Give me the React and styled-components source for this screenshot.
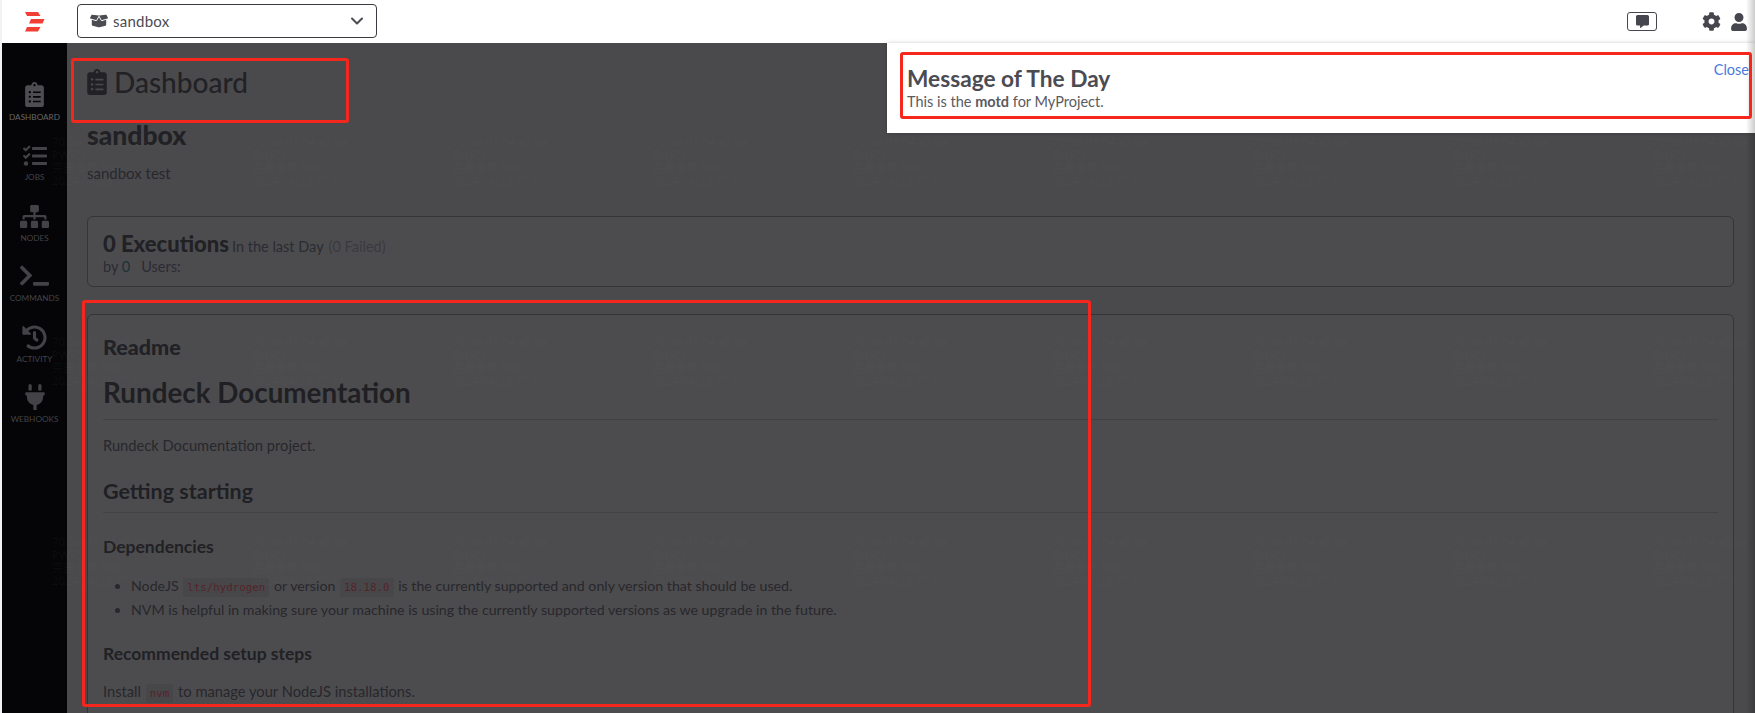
import React from "react";
import styled, { createGlobalStyle } from "styled-components";
import { FaClipboardList, FaTasks, FaSitemap, FaTerminal, FaHistory, FaPlug, FaBoxOpen, FaCog, FaUser, FaCommentAlt } from "react-icons/fa";
import { ChevronDown } from "lucide-react";

const Global = createGlobalStyle`
  html, body { margin: 0; padding: 0; height: 100%; overflow: hidden; background: #fff; }
  * { box-sizing: border-box; }
  body { font-family: "Lato", "Noto Sans", sans-serif; }
`;

const Page = styled.div`
  position: relative;
  width: 1755px;
  height: 713px;
  overflow: hidden;
  padding-left: 2px;
  background: #f2f2f4;
  display: flex;
  flex-direction: column;
`;

const TopBar = styled.header`
  flex: 0 0 43px;
  background: #fff;
  display: flex;
  align-items: center;
  padding-right: 7px;
`;

const LogoSlot = styled.div`
  width: 75px;
  display: flex;
  padding-left: 23px;
`;

const ProjectSelect = styled.div`
  width: 300px;
  height: 34px;
  margin-top: -1px;
  border: 1px solid #3a3a40;
  border-radius: 4px;
  display: flex;
  align-items: center;
  gap: 5px;
  padding: 0 9px 0 12px;
  color: #4b4b52;
  font-size: 15px;
  letter-spacing: .25px;
  svg:last-child { margin-left: auto; }
`;

const TopRight = styled.div`
  margin-left: auto;
  display: flex;
  align-items: center;
  color: #46464e;
`;

const ChatButton = styled.div`
  width: 30px;
  height: 19px;
  border: 1px solid #46464e;
  border-radius: 3px;
  display: flex;
  align-items: center;
  justify-content: center;
  margin-right: 45px;
`;

const ToolIcon = styled.span`
  display: flex;
  margin-left: ${(p) => p.$gap || 0}px;
`;

const Body = styled.div`
  flex: 1;
  display: flex;
  min-height: 0;
`;

const Side = styled.nav`
  flex: 0 0 65px;
  background: #050507;
  padding-top: 38px;
  display: flex;
  flex-direction: column;
`;

const NavItem = styled.div`
  height: 60.4px;
  display: flex;
  flex-direction: column;
  align-items: center;
  font-size: 8.2px;
  text-transform: uppercase;
`;

const NavIcon = styled.div`
  height: 30px;
  display: flex;
  align-items: center;
  justify-content: center;
  color: ${(p) => (p.$on ? "#4d4d52" : "#434347")};
  svg { transform: translateY(${(p) => p.$dy || 0}px); }
`;

const NavLabel = styled.span`
  line-height: 12px;
  color: ${(p) => (p.$on ? "#66666b" : "#434347")};
`;

const Main = styled.main`
  flex: 1;
  background: #4a4a4c;
  padding: 24px 21px 0 20px;
  min-width: 0;
`;

const PageTitle = styled.h1`
  margin: 0;
  height: 30px;
  display: flex;
  align-items: center;
  gap: 4px;
  font-size: 28px;
  font-weight: 500;
  line-height: 30px;
  color: #212126;
  svg { margin-left: -3px; }
`;

const ProjectName = styled.h2`
  margin: 23px 0 0;
  font-size: 26.5px;
  line-height: 30px;
  font-weight: 900;
  color: #212125;
`;

const Lead = styled.p`
  margin: 13px 0 0;
  font-size: 15px;
  line-height: 20px;
  color: #28272c;
`;

const Card = styled.section`
  margin-top: ${(p) => p.$top}px;
  height: ${(p) => p.$h};
  border: 1px solid #353537;
  border-radius: 6px;
  background: #4c4c4e;
  padding: ${(p) => p.$pad};
`;

const Stat = styled.div`
  height: 23px;
  font-size: 14.5px;
  line-height: 23px;
  color: #2b2b32;
`;

const StatBig = styled.b`
  font-size: 22px;
  font-weight: 900;
  color: #212125;
  margin-right: 3px;
`;

const Muted = styled.span`
  color: #3a3a3e;
  margin-left: 5px;
`;

const Teal = styled.span`
  color: #1a3236;
  margin: 0 11px 0 0;
`;

const ReadmeTitle = styled.h3`
  margin: 0;
  font-size: 21.5px;
  line-height: 26px;
  font-weight: 900;
  color: #212125;
`;

const DocH1 = styled.h1`
  margin: 15px 0 0;
  font-size: 27.8px;
  line-height: 36px;
  font-weight: 700;
  color: #1f1f24;
  padding-bottom: 8px;
  border-bottom: 1px solid #424244;
`;

const DocH2 = styled.h2`
  margin: 22px 0 0;
  font-size: 21.5px;
  line-height: 28px;
  font-weight: 700;
  color: #1f1f24;
  padding-bottom: 7px;
  border-bottom: 1px solid #424244;
`;

const DocH3 = styled.h3`
  margin: ${(p) => p.$top}px 0 0;
  font-size: 17.5px;
  line-height: 22px;
  font-weight: 700;
  color: #212125;
`;

const DocP = styled.p`
  margin: ${(p) => p.$top}px 0 0;
  font-size: 14.7px;
  line-height: 20px;
  color: #28272c;
`;

const DocList = styled.ul`
  margin: 16px 0 0;
  padding-left: 28px;
  font-size: 14.2px;
  line-height: 24px;
  color: #28272c;
  li { height: 24px; }
`;

const Code = styled.code`
  font-family: "DejaVu Sans Mono", monospace;
  font-size: 10.8px;
  color: #55242a;
  background: #474749;
  border-radius: 3px;
  padding: 3px 4px;
  margin: 0 1px;
`;

const Marks = styled.div`
  position: absolute;
  left: 52px;
  top: 135px;
  display: grid;
  grid-template-columns: repeat(9, 200px);
  grid-auto-rows: 200px;
  justify-items: start;
  pointer-events: none;
`;

const Mark = styled.div`
  font-family: "Noto Sans", "Noto Sans CJK SC", sans-serif;
  font-size: 11.5px;
  line-height: 13px;
  color: rgba(125, 135, 135, .07);
`;

const Motd = styled.aside`
  position: absolute;
  left: 887px;
  top: 43px;
  width: 868px;
  height: 90px;
  background: #fff;
  padding: 24px 0 0 20px;
  box-shadow: 0 0 4px rgba(0,0,0,.2);
`;

const MotdTitle = styled.div`
  font-size: 22.7px;
  line-height: 24px;
  font-weight: 700;
  color: #4b4b53;
`;

const MotdText = styled.div`
  font-size: 14.5px;
  line-height: 22px;
  color: #5a5a61;
`;

const Close = styled.a`
  position: absolute;
  right: 6px;
  top: 18px;
  font-size: 14.5px;
  line-height: 18px;
  color: #4a7adb;
`;

const EdgeShade = styled.div`
  position: absolute;
  right: 0;
  top: 0;
  bottom: 0;
  width: 9px;
  background: linear-gradient(to right, rgba(0,0,0,0), rgba(0,0,0,.2));
  pointer-events: none;
`;

const Callout = styled.div`
  position: absolute;
  left: ${(p) => p.$x}px;
  top: ${(p) => p.$y}px;
  width: ${(p) => p.$w}px;
  height: ${(p) => p.$h}px;
  border: 3px solid #f5261b;
  border-radius: 3px;
  pointer-events: none;
`;

const Logo = () => (
  <svg width="20" height="21" viewBox="0 0 20 21" fill="#f23f36">
    <polygon points="0,1 13,1 15.5,5 2,5" />
    <polygon points="6,8 19.5,8 17.5,12.5 4,12.5" />
    <polygon points="2,16 15.5,16 13,20.5 0,20.5" />
  </svg>
);

const nav = [
  { label: "Dashboard", Icon: FaClipboardList, size: 25, on: true, dy: -2 },
  { label: "Jobs", Icon: FaTasks, size: 24 },
  { label: "Nodes", Icon: FaSitemap, size: 29 },
  { label: "Commands", Icon: FaTerminal, size: 29, dy: -2 },
  { label: "Activity", Icon: FaHistory, size: 25 },
  { label: "Webhooks", Icon: FaPlug, size: 26, dy: -1 },
];

const markLines = ["70:9b:d1:b4:e3:ee", "PWRD", "完美世界游戏", "2024-04-23 17:11"];

export default function App() {
  return (
    <Page>
      <Global />
      <TopBar>
        <LogoSlot><Logo /></LogoSlot>
        <ProjectSelect>
          <FaBoxOpen size={18} />
          sandbox
          <ChevronDown size={20} strokeWidth={2.4} />
        </ProjectSelect>
        <TopRight>
          <ChatButton><FaCommentAlt size={13} /></ChatButton>
          <ToolIcon><FaCog size={19} /></ToolIcon>
          <ToolIcon $gap={9}><FaUser size={18} /></ToolIcon>
        </TopRight>
      </TopBar>
      <Body>
        <Side>
          {nav.map(({ label, Icon, size, on, dy }) => (
            <NavItem key={label}>
              <NavIcon $on={on} $dy={dy}><Icon size={size} /></NavIcon>
              <NavLabel $on={on}>{label}</NavLabel>
            </NavItem>
          ))}
        </Side>
        <Main>
          <PageTitle><FaClipboardList size={26} />Dashboard</PageTitle>
          <ProjectName>sandbox</ProjectName>
          <Lead>sandbox test</Lead>
          <Card $top={33} $h="71px" $pad="15px 15px 0">
            <Stat><StatBig>0 Executions</StatBig>In the last Day<Muted>(0 Failed)</Muted></Stat>
            <Stat>by <Teal>0</Teal>Users:</Stat>
          </Card>
          <Card $top={27} $h="500px" $pad="19px 15px 0">
            <ReadmeTitle>Readme</ReadmeTitle>
            <DocH1>Rundeck Documentation</DocH1>
            <DocP $top={15}>Rundeck Documentation project.</DocP>
            <DocH2>Getting starting</DocH2>
            <DocH3 $top={23}>Dependencies</DocH3>
            <DocList>
              <li>NodeJS <Code>lts/hydrogen</Code> or version <Code>18.18.0</Code> is the currently supported and only version that should be used.</li>
              <li>NVM is helpful in making sure your machine is using the currently supported versions as we upgrade in the future.</li>
            </DocList>
            <DocH3 $top={21}>Recommended setup steps</DocH3>
            <DocP $top={16}>Install <Code>nvm</Code> to manage your NodeJS installations.</DocP>
          </Card>
        </Main>
      </Body>
      <Marks>
        {Array.from({ length: 27 }, (_, i) => (
          <Mark key={i}>{markLines.map((l) => <div key={l}>{l}</div>)}</Mark>
        ))}
      </Marks>
      <Motd>
        <MotdTitle>Message of The Day</MotdTitle>
        <MotdText>This is the <b>motd</b> for MyProject.</MotdText>
        <Close>Close</Close>
      </Motd>
      <EdgeShade />
      <Callout $x={71} $y={58} $w={278} $h={65} />
      <Callout $x={900} $y={52} $w={852} $h={67} />
      <Callout $x={82} $y={300} $w={1009} $h={407} />
    </Page>
  );
}
